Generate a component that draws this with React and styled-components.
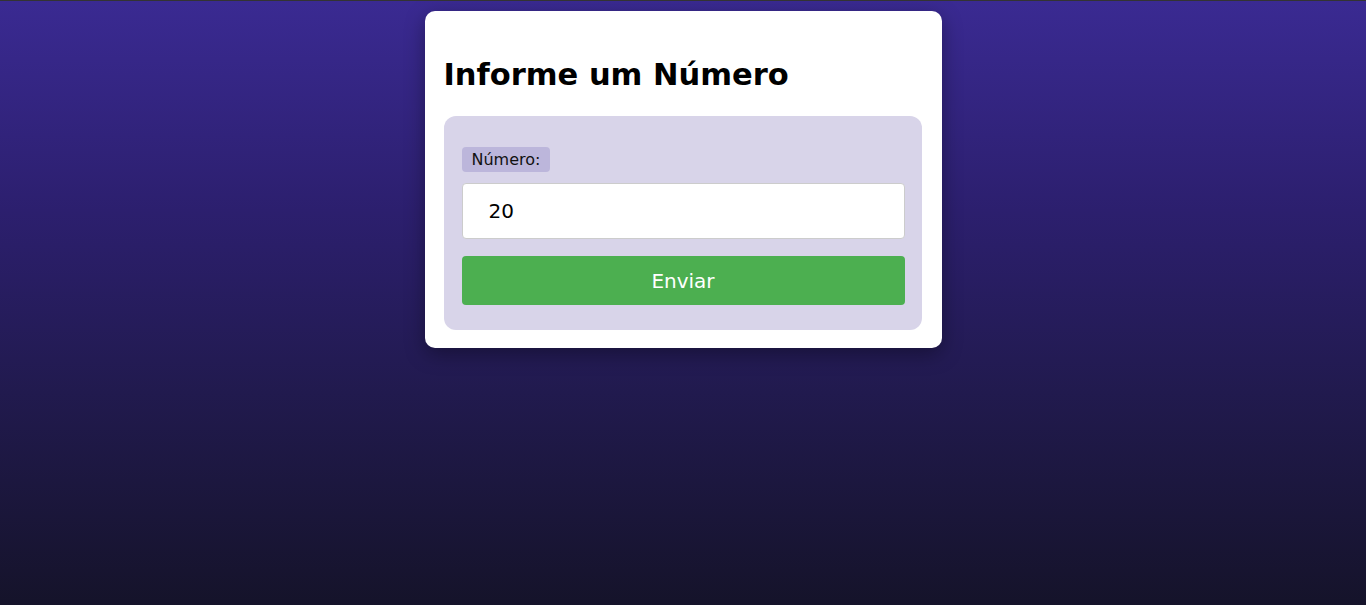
import { useState } from 'react'
import styled, { createGlobalStyle } from 'styled-components'

const GlobalStyle = createGlobalStyle`
  html, body {
    margin: 0;
    padding: 0;
  }
  body {
    min-height: 605px;
    font-family: "DejaVu Sans", Verdana, sans-serif;
    background: linear-gradient(to bottom, #3a2a92 0%, #2c1f6e 35%, #211a4e 65%, #15132a 100%);
    border-top: 1px solid #333;
    box-sizing: border-box;
  }
`

const Page = styled.div`
  display: flex;
  justify-content: center;
  padding-top: 10px;
`

const Card = styled.div`
  width: 517px;
  box-sizing: border-box;
  background: #ffffff;
  border-radius: 10px;
  padding: 20px 20px 18px 19px;
  box-shadow: 0 6px 20px rgba(0, 0, 0, 0.35);
`

const Title = styled.h2`
  margin: 26px 0 24px;
  font-size: 30.5px;
  line-height: 35px;
  font-weight: bold;
  color: #000;
`

const Form = styled.form`
  display: flex;
  flex-direction: column;
  background: #d8d4e9;
  border-radius: 12px;
  padding: 31px 17px 25px 18px;
`

const Label = styled.label`
  align-self: flex-start;
  background: #bcb6db;
  border-radius: 4px;
  padding: 3px 10px;
  font-size: 16px;
  line-height: 19px;
  color: #111;
  margin-bottom: 11px;
`

const Input = styled.input`
  height: 56px;
  box-sizing: border-box;
  border: 1px solid #ccc;
  border-radius: 4px;
  padding: 0 26px;
  font-family: "DejaVu Sans", Verdana, sans-serif;
  font-size: 20px;
  color: #000;
  background: #fff;
  outline: none;
  margin-bottom: 17px;
`

const Button = styled.button`
  height: 49px;
  border: none;
  border-radius: 4px;
  background: #4caf50;
  color: #fff;
  font-family: "DejaVu Sans", Verdana, sans-serif;
  font-size: 20px;
  cursor: pointer;
`

export default function App() {
  const [numero, setNumero] = useState('20')

  return (
    <>
      <GlobalStyle />
      <Page>
        <Card>
          <Title>Informe um Número</Title>
          <Form onSubmit={e => e.preventDefault()}>
            <Label htmlFor="numero">Número:</Label>
            <Input
              id="numero"
              type="text"
              value={numero}
              onChange={e => setNumero(e.target.value)}
            />
            <Button type="submit">Enviar</Button>
          </Form>
        </Card>
      </Page>
    </>
  )
}
